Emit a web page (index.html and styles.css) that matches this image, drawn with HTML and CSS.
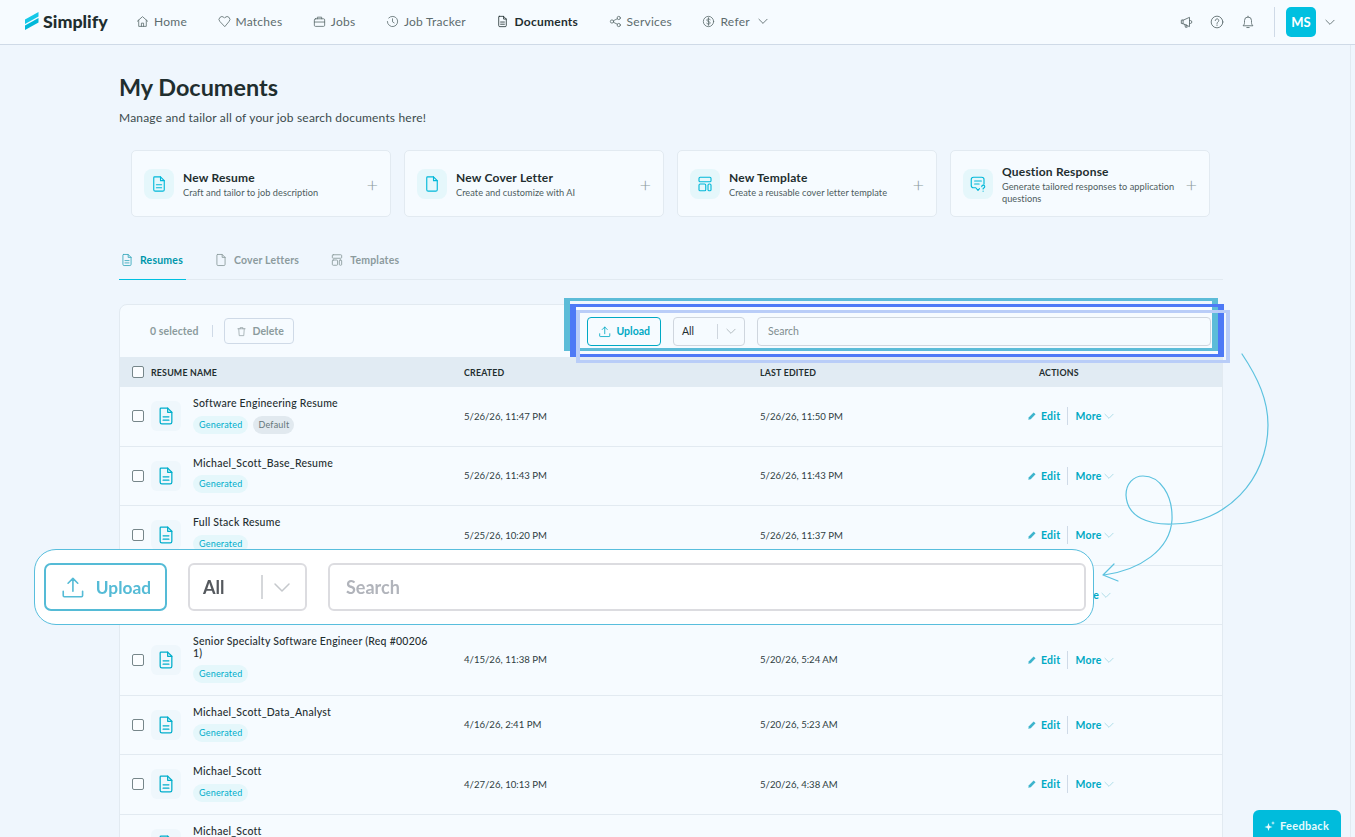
FILE: index.html
```html
<!DOCTYPE html>
<html>
<head>
    <title>My Documents | Simplify</title>
    <link rel="stylesheet" href="styles.css">
</head>
<body>
    <svg class="defs">
        <symbol id="doc" viewBox="0 0 24 24"><path d="M6 2.500h8l5 5v12a2 2 0 0 1-2 2H7a2 2 0 0 1-2-2v-16a1 1 0 0 1 1-1z"/><path d="M14 2.500v5h5M8.500 13h7M8.500 17h7"/></symbol>
        <symbol id="page" viewBox="0 0 24 24"><path d="M6 2.500h8l5 5v12a2 2 0 0 1-2 2H7a2 2 0 0 1-2-2v-16a1 1 0 0 1 1-1z"/><path d="M14 2.500v5h5"/></symbol>
        <symbol id="tpl" viewBox="0 0 24 24"><rect x="4" y="3" width="16" height="6" rx="1.500"/><rect x="4" y="12" width="9" height="9" rx="1.500"/><rect x="16" y="12" width="4" height="9" rx="1.500"/></symbol>
        <symbol id="chev" viewBox="0 0 24 24"><path d="M5 9l7 7 7-7"/></symbol>
        <symbol id="pen" viewBox="0 0 24 24"><path d="M3 21l1.500-6L16 3.500l4.500 4.500L9 19.500z" fill="currentColor"/></symbol>
        <symbol id="upload" viewBox="0 0 24 24"><path d="M12 16V4M7.500 8.500L12 4l4.500 4.500M3 16v4a1 1 0 0 0 1 1h16a1 1 0 0 0 1-1v-4"/></symbol>
    </svg>

    <header class="nav">
        <a class="logo">
            <svg class="logo-mark" viewBox="0 0 14 18"><path d="M0 7.500L13.500 0v4.500L0 12z" fill="#14c8e8"/><path d="M0 13.500L13.500 6v4.500L0 18z" fill="#00b8d9"/></svg>
            <span>Simplify</span>
        </a>
        <nav class="nav-links">
            <a class="nav-link"><svg class="ico" viewBox="0 0 24 24"><path d="M2.500 11.500L12 3l9.500 8.500M5 9.500V21h14V9.500M10 21v-6h4v6"/></svg>Home</a>
            <a class="nav-link"><svg class="ico" viewBox="0 0 24 24"><path d="M12 21L3.500 12a5.300 5.300 0 0 1 7.500-7.500l1 1 1-1a5.300 5.300 0 0 1 7.500 7.500z"/></svg>Matches</a>
            <a class="nav-link"><svg class="ico" viewBox="0 0 24 24"><rect x="2.500" y="7" width="19" height="14" rx="2"/><path d="M8 7V4h8v3M2.500 13h19"/></svg>Jobs</a>
            <a class="nav-link"><svg class="ico" viewBox="0 0 24 24"><path d="M5 5.500a9.500 9.500 0 1 1-2.500 6.500M12 7v5.500l3 2"/></svg>Job Tracker</a>
            <a class="nav-link active"><svg class="ico"><use href="#doc"/></svg>Documents</a>
            <a class="nav-link"><svg class="ico" viewBox="0 0 24 24"><circle cx="5.500" cy="12" r="3"/><circle cx="18" cy="5.500" r="3"/><circle cx="18" cy="18.500" r="3"/><path d="M8.300 10.500l7-3.500M8.300 13.500l7 3.500"/></svg>Services</a>
            <a class="nav-link"><svg class="ico" viewBox="0 0 24 24"><circle cx="12" cy="12" r="9.500"/><path d="M15 9c-.5-1.300-1.500-2-3-2-1.700 0-3 1-3 2.500 0 3.500 6 1.500 6 5 0 1.500-1.300 2.500-3 2.500-1.500 0-2.500-.7-3-2M12 5v14"/></svg>Refer<svg class="nav-chev"><use href="#chev"/></svg></a>
        </nav>
        <div class="nav-right">
            <svg class="nav-tool" viewBox="0 0 24 24"><path d="M4 9.500v5l3 .5V9zM7 9l11-5v16L7 15M10 16l1 5h3l-1-4M18 9.500h1.500a2.500 2.500 0 0 1 0 5H18"/></svg>
            <svg class="nav-tool" viewBox="0 0 24 24"><circle cx="12" cy="12" r="10"/><path d="M9 9.500a3 3 0 1 1 4.500 2.600c-1 .6-1.500 1.200-1.500 2.400M12 17v1"/></svg>
            <svg class="nav-tool" viewBox="0 0 24 24"><path d="M4 18c1.500-1.500 2-3 2-5V9.500a6 6 0 0 1 12 0V13c0 2 .5 3.500 2 5zM10 21.500h4M12 2v1.500"/></svg>
            <span class="nav-divider"></span>
            <span class="avatar">MS</span>
            <svg class="nav-chev"><use href="#chev"/></svg>
        </div>
    </header>

    <main class="main">
        <h1 class="title">My Documents</h1>
        <p class="subtitle">Manage and tailor all of your job search documents here!</p>

        <section class="cards">
            <div class="card">
                <span class="card-icon"><svg><use href="#doc"/></svg></span>
                <div class="card-text"><h3>New Resume</h3><p>Craft and tailor to job description</p></div>
                <span class="card-plus">+</span>
            </div>
            <div class="card">
                <span class="card-icon"><svg><use href="#page"/></svg></span>
                <div class="card-text"><h3>New Cover Letter</h3><p>Create and customize with AI</p></div>
                <span class="card-plus">+</span>
            </div>
            <div class="card">
                <span class="card-icon"><svg><use href="#tpl"/></svg></span>
                <div class="card-text"><h3>New Template</h3><p>Create a reusable cover letter template</p></div>
                <span class="card-plus">+</span>
            </div>
            <div class="card">
                <span class="card-icon"><svg viewBox="0 0 24 24"><path d="M20 12V6a3 3 0 0 0-3-3H6a3 3 0 0 0-3 3v8a3 3 0 0 0 3 3h3l3 3.500 2-2.300M7.500 8h9M7.500 12h6M17 15.500a2 2 0 1 1 2.500 2c-.6.3-.7.7-.7 1.200M18.800 21.500v.2"/></svg></span>
                <div class="card-text"><h3>Question Response</h3><p>Generate tailored responses to application questions</p></div>
                <span class="card-plus">+</span>
            </div>
        </section>

        <div class="tabs">
            <a class="tab active"><svg><use href="#doc"/></svg>Resumes</a>
            <a class="tab"><svg><use href="#page"/></svg>Cover Letters</a>
            <a class="tab"><svg><use href="#tpl"/></svg>Templates</a>
        </div>

        <section class="panel">
            <div class="toolbar">
                <span class="selected">0 selected</span>
                <span class="tool-divider"></span>
                <button class="btn-delete"><svg viewBox="0 0 24 24"><path d="M4 6h16M9 6V3.500h6V6M6 6l1 15h10l1-15"/></svg>Delete</button>
                <div class="toolbar-right">
                    <button class="btn-upload"><svg><use href="#upload"/></svg>Upload</button>
                    <div class="select"><span>All</span><i></i><svg><use href="#chev"/></svg></div>
                    <div class="search">Search</div>
                </div>
            </div>

            <div class="row head">
                <div class="name-cell"><span class="check"></span>RESUME NAME</div>
                <div>CREATED</div>
                <div>LAST EDITED</div>
                <div class="head-actions">ACTIONS</div>
            </div>

            <div class="row">
                <div class="name-cell"><span class="check"></span><span class="file"><svg><use href="#doc"/></svg></span>
                    <div class="name"><b>Software Engineering Resume</b><div class="tags"><span class="tag">Generated</span><span class="tag grey">Default</span></div></div></div>
                <div>5/26/26, 11:47 PM</div>
                <div>5/26/26, 11:50 PM</div>
                <div class="actions"><a class="edit"><svg><use href="#pen"/></svg>Edit</a><a class="more">More<svg><use href="#chev"/></svg></a></div>
            </div>
            <div class="row">
                <div class="name-cell"><span class="check"></span><span class="file"><svg><use href="#doc"/></svg></span>
                    <div class="name"><b>Michael_Scott_Base_Resume</b><div class="tags"><span class="tag">Generated</span></div></div></div>
                <div>5/26/26, 11:43 PM</div>
                <div>5/26/26, 11:43 PM</div>
                <div class="actions"><a class="edit"><svg><use href="#pen"/></svg>Edit</a><a class="more">More<svg><use href="#chev"/></svg></a></div>
            </div>
            <div class="row">
                <div class="name-cell"><span class="check"></span><span class="file"><svg><use href="#doc"/></svg></span>
                    <div class="name"><b>Full Stack Resume</b><div class="tags"><span class="tag">Generated</span></div></div></div>
                <div>5/25/26, 10:20 PM</div>
                <div>5/26/26, 11:37 PM</div>
                <div class="actions"><a class="edit"><svg><use href="#pen"/></svg>Edit</a><a class="more">More<svg><use href="#chev"/></svg></a></div>
            </div>
            <div class="row">
                <div class="name-cell"></div>
                <div></div>
                <div></div>
                <div class="actions"><a class="more more-hidden">More<svg><use href="#chev"/></svg></a></div>
            </div>
            <div class="row tall">
                <div class="name-cell"><span class="check"></span><span class="file"><svg><use href="#doc"/></svg></span>
                    <div class="name"><b>Senior Specialty Software Engineer (Req #002061)</b><div class="tags"><span class="tag">Generated</span></div></div></div>
                <div>4/15/26, 11:38 PM</div>
                <div>5/20/26, 5:24 AM</div>
                <div class="actions"><a class="edit"><svg><use href="#pen"/></svg>Edit</a><a class="more">More<svg><use href="#chev"/></svg></a></div>
            </div>
            <div class="row">
                <div class="name-cell"><span class="check"></span><span class="file"><svg><use href="#doc"/></svg></span>
                    <div class="name"><b>Michael_Scott_Data_Analyst</b><div class="tags"><span class="tag">Generated</span></div></div></div>
                <div>4/16/26, 2:41 PM</div>
                <div>5/20/26, 5:23 AM</div>
                <div class="actions"><a class="edit"><svg><use href="#pen"/></svg>Edit</a><a class="more">More<svg><use href="#chev"/></svg></a></div>
            </div>
            <div class="row">
                <div class="name-cell"><span class="check"></span><span class="file"><svg><use href="#doc"/></svg></span>
                    <div class="name"><b>Michael_Scott</b><div class="tags"><span class="tag">Generated</span></div></div></div>
                <div>4/27/26, 10:13 PM</div>
                <div>5/20/26, 4:38 AM</div>
                <div class="actions"><a class="edit"><svg><use href="#pen"/></svg>Edit</a><a class="more">More<svg><use href="#chev"/></svg></a></div>
            </div>
            <div class="row">
                <div class="name-cell"><span class="check"></span><span class="file"><svg><use href="#doc"/></svg></span>
                    <div class="name name-cut"><b>Michael_Scott</b></div></div>
                <div></div>
                <div></div>
                <div class="actions"></div>
            </div>
        </section>
    </main>

    <!-- tutorial overlay -->
    <div class="hl hl-teal"></div>
    <div class="hl hl-blue"></div>
    <div class="hl hl-light"></div>

    <svg class="arrow" viewBox="0 0 1355 837">
        <path d="M1242 354C1258 378 1268 400 1268 425C1268 480 1225 524 1173 524C1150 525 1127 518 1126 495C1126 484 1133 476 1143 476C1160 476 1173 495 1172 520C1170 550 1140 570 1104 575M1114 564L1103 575L1118 581"/>
    </svg>

    <div class="callout">
        <button class="big-upload"><svg><use href="#upload"/></svg>Upload</button>
        <div class="big-select"><span>All</span><i></i><svg><use href="#chev"/></svg></div>
        <div class="big-search">Search</div>
    </div>

    <button class="feedback">
        <svg viewBox="0 0 24 24"><path d="M9 6l2 6 6 2-6 2-2 6-2-6-6-2 6-2zM18 2l1 3 3 1-3 1-1 3-1-3-3-1 3-1z" fill="currentColor"/></svg>Feedback
    </button>
</body>
</html>
```

FILE: styles.css
```css
html, body {
    margin: 0;
    height: 837px;
    overflow: hidden;
}

body {
    position: relative;
    background: #eff6fd;
    color: #1f2e2f;
    font-family: "Lato", "Liberation Sans", sans-serif;
}

svg {
    fill: none;
    stroke: currentColor;
    stroke-width: 1.5;
    stroke-linecap: round;
    stroke-linejoin: round;
}

.defs {
    display: none;
}

button {
    font-family: inherit;
}

/* top bar */
.nav {
    display: flex;
    align-items: center;
    height: 44px;
    padding: 0 18px 0 25px;
    background: #f6fbff;
    border-bottom: 1px solid #cfdae7;
}

.logo {
    display: flex;
    align-items: center;
    gap: 4px;
    width: 111px;
    margin-bottom: 2px;
    font-size: 17.8px;
    font-weight: 900;
}

.logo-mark {
    width: 14px;
    height: 18px;
    stroke: none;
}

.nav-links {
    display: flex;
    gap: 30.5px;
    margin-bottom: 2px;
}

.nav-link {
    display: flex;
    align-items: center;
    gap: 5px;
    font-size: 12px;
    letter-spacing: .25px;
    color: #5d6c6e;
}

.nav-link.active {
    color: #1f2e2f;
    font-weight: 700;
}

.ico {
    width: 13px;
    height: 13px;
}

.nav-chev {
    width: 14px;
    height: 14px;
    margin-left: 1px;
}

.nav-right {
    display: flex;
    align-items: center;
    margin-left: auto;
    color: #5d6c6e;
}

.nav-tool {
    width: 14px;
    height: 14px;
    margin-right: 17px;
}

.nav-divider {
    width: 1px;
    height: 30px;
    margin: 0 11px 0 2px;
    background: #cfdae7;
}

.avatar {
    display: flex;
    align-items: center;
    justify-content: center;
    width: 30px;
    height: 30px;
    margin-right: 6px;
    background: #00c0e0;
    border-radius: 5px;
    color: #fff;
    font-size: 13px;
    font-weight: 700;
}

/* page */
.main {
    width: 1104px;
    padding: 28px 127px 0 119px;
    border-right: 1px solid #e2eaf1;
    height: 800px;
}

.title {
    margin: 0;
    font-size: 23.4px;
    line-height: 28px;
    font-weight: 700;
}

.subtitle {
    margin: 9px 0 0;
    font-size: 12px;
    line-height: 16px;
    letter-spacing: .18px;
    color: #3c4b4c;
}

.cards {
    display: flex;
    gap: 13px;
    margin: 24px 0 0 12px;
}

.card {
    display: flex;
    align-items: center;
    box-sizing: border-box;
    width: 260px;
    height: 67px;
    padding: 0 12px;
    background: #f6fbff;
    border: 1px solid #e2eaf1;
    border-radius: 5px;
}

.card-icon {
    display: flex;
    align-items: center;
    justify-content: center;
    flex: none;
    width: 30px;
    height: 30px;
    margin-right: 9px;
    background: #e5f7fb;
    border-radius: 8px;
    color: #00b8d9;
}

.card-icon svg {
    width: 18px;
    height: 18px;
}

.card-text {
    flex: 1;
    padding-top: 2px;
}

.card-text h3 {
    margin: 0;
    font-size: 12px;
    line-height: 15px;
    font-weight: 700;
    letter-spacing: .2px;
}

.card-text p {
    margin: 2px 0 0;
    font-size: 9.2px;
    line-height: 12px;
    letter-spacing: .05px;
    color: #4d5c5d;
}

.card-plus {
    margin-left: 6px;
    font-size: 20px;
    font-weight: 300;
    color: #8a9a9b;
}

.tabs {
    display: flex;
    gap: 31px;
    height: 29px;
    margin-top: 33px;
    border-bottom: 1px solid #e2eaf1;
}

.tab {
    display: flex;
    align-items: center;
    gap: 6px;
    box-sizing: border-box;
    height: 29px;
    padding-bottom: 9px;
    font-size: 10.5px;
    font-weight: 700;
    letter-spacing: .2px;
    color: #8c9b9d;
}

.tab svg {
    width: 14px;
    height: 14px;
}

.tab.active {
    padding-left: 1px;
    padding-right: 3px;
    margin-right: -3px;
    color: #0096ab;
    box-shadow: 0 1px 0 #00c0e0;
}

.tab.active svg {
    color: #3aa9bd;
}

/* table */
.panel {
    margin-top: 24px;
    background: #f6fbff;
    border: 1px solid #e2eaf1;
    border-radius: 8px 8px 0 0;
    overflow: hidden;
}

.toolbar {
    display: flex;
    align-items: center;
    height: 52px;
    padding: 0 11px 0 30px;
}

.selected {
    font-size: 10.5px;
    font-weight: 700;
    letter-spacing: .1px;
    color: #8c9b9d;
}

.tool-divider {
    width: 1px;
    height: 12px;
    margin: 0 11px 0 13px;
    background: #cfdae7;
}

.btn-delete {
    display: flex;
    align-items: center;
    gap: 6px;
    height: 26px;
    padding: 0 9px 0 11px;
    background: none;
    border: 1px solid #cfdae7;
    border-radius: 4px;
    font-size: 10.5px;
    font-weight: 700;
    color: #8c9b9d;
}

.btn-delete svg {
    width: 11px;
    height: 11px;
}

.toolbar-right {
    display: flex;
    gap: 12px;
    margin-left: auto;
}

.btn-upload {
    display: flex;
    align-items: center;
    gap: 5px;
    box-sizing: border-box;
    width: 74px;
    height: 29px;
    padding: 0 10px;
    background: none;
    border: 1px solid #00a9c4;
    border-radius: 4px;
    color: #00a9c4;
    font-size: 10.5px;
    font-weight: 700;
}

.btn-upload svg {
    width: 15px;
    height: 15px;
}

.select {
    display: flex;
    align-items: center;
    box-sizing: border-box;
    width: 72px;
    height: 29px;
    padding-left: 8px;
    border: 1px solid #cfd6de;
    border-radius: 4px;
    font-size: 10.5px;
}

.select span {
    width: 35px;
}

.select i {
    width: 1px;
    height: 15px;
    background: #cfd6de;
}

.select svg {
    width: 14px;
    height: 14px;
    margin-left: 6px;
    color: #aab4b8;
}

.search {
    box-sizing: border-box;
    width: 454px;
    height: 29px;
    padding-left: 10px;
    border: 1px solid #cfd6de;
    border-radius: 4px;
    font-size: 10.5px;
    line-height: 27px;
    color: #7f8d8f;
}

.row {
    display: grid;
    grid-template-columns: 332px 296px 267px 1fr;
    align-items: center;
    box-sizing: border-box;
    height: 59.6px;
    padding-left: 12px;
    border-bottom: 1px solid #e2eaf1;
    font-size: 9.6px;
    color: #2f3e3f;
}

.row.tall {
    height: 70.2px;
}

.row.head {
    height: 30px;
    background: #e1ebf3;
    border-bottom: 0;
    font-size: 8.8px;
    font-weight: 700;
    letter-spacing: .2px;
    color: #1f2e2f;
}

.head-actions {
    padding-left: 12px;
}

.name-cell {
    display: flex;
    align-items: center;
}

.check {
    flex: none;
    box-sizing: border-box;
    width: 12px;
    height: 12px;
    margin-right: 7px;
    background: #fbfdff;
    border: 1px solid #76868a;
    border-radius: 2px;
}

.file {
    display: flex;
    align-items: center;
    justify-content: center;
    flex: none;
    width: 30px;
    height: 30px;
    margin-right: 12px;
    background: #eff7fc;
    border-radius: 6px;
    color: #00aecb;
}

.file svg {
    width: 20px;
    height: 20px;
}

.name {
    width: 238px;
    padding-bottom: 2px;
    word-break: break-all;
}

.name-cut {
    padding-bottom: 26px;
}

.name b {
    display: block;
    font-size: 10.5px;
    font-weight: 500;
    line-height: 12px;
    letter-spacing: .25px;
    color: #1f2e2f;
}

.tags {
    display: flex;
    gap: 5px;
    margin-top: 6.5px;
}

.tall .tags {
    margin-top: 5.5px;
}

.tag {
    padding: 0 6px;
    height: 18px;
    line-height: 18px;
    background: #e5f7fb;
    border-radius: 9px;
    font-size: 9px;
    letter-spacing: .2px;
    color: #00aecb;
}

.tag.grey {
    padding: 0 5px;
    background: #e1e9ef;
    color: #66767a;
}

.actions {
    display: flex;
    align-items: center;
    font-size: 10.5px;
    font-weight: 700;
    letter-spacing: .25px;
    color: #00a9c4;
}

.edit {
    display: flex;
    align-items: center;
    gap: 4px;
    height: 18px;
    padding-right: 7px;
    border-right: 1px solid #cfdae7;
}

.edit svg {
    width: 10px;
    height: 10px;
    stroke: none;
    color: #3db4cc;
}

.more {
    display: flex;
    align-items: center;
    margin-left: 7px;
}

.more-hidden {
    margin-left: 46px;
}

.more svg {
    width: 14px;
    height: 14px;
    stroke-width: 1;
    color: #7cc7d8;
}

/* highlight boxes over the toolbar */
.hl {
    position: absolute;
    width: 654px;
    height: 53px;
    box-sizing: border-box;
    border-style: solid;
    border-width: 3px 6px;
}

.hl-teal {
    left: 564px;
    top: 298px;
    border-color: #5cbcd8;
}

.hl-blue {
    left: 570px;
    top: 304px;
    border-color: #4d79f6;
}

.hl-light {
    left: 576px;
    top: 310px;
    border-width: 3px 4px;
    border-color: #b9cdf8;
}

.arrow {
    position: absolute;
    left: 0;
    top: 0;
    width: 1355px;
    height: 837px;
    stroke: #5cc2df;
    stroke-width: 1.2;
    pointer-events: none;
}

.callout {
    position: absolute;
    left: 34px;
    top: 549px;
    display: flex;
    align-items: center;
    gap: 21px;
    box-sizing: border-box;
    width: 1060px;
    height: 76px;
    padding: 0 7px 0 9px;
    background: #fff;
    border: 1px solid #58bedd;
    border-radius: 22px;
}

.big-upload {
    display: flex;
    align-items: center;
    gap: 10px;
    box-sizing: border-box;
    width: 123px;
    height: 48px;
    padding: 0 14px;
    background: #fff;
    border: 2px solid #55bbd6;
    border-radius: 7px;
    color: #55bbd6;
    font-size: 17.3px;
    font-weight: 700;
    filter: blur(.6px);
}

.big-upload svg {
    width: 26px;
    height: 26px;
}

.big-select {
    display: flex;
    align-items: center;
    box-sizing: border-box;
    width: 119px;
    height: 48px;
    padding-left: 13px;
    border: 2px solid #dcdce0;
    border-radius: 6px;
    font-size: 18px;
    font-weight: 700;
    color: #55595e;
    filter: blur(.6px);
}

.big-select span {
    width: 58px;
}

.big-select i {
    width: 2px;
    height: 24px;
    background: #d5d7da;
}

.big-select svg {
    width: 24px;
    height: 24px;
    margin-left: 7px;
    color: #c5c8cc;
}

.big-search {
    box-sizing: border-box;
    width: 758px;
    height: 48px;
    padding-left: 16px;
    border: 2px solid #dcdce0;
    border-radius: 6px;
    font-size: 18px;
    font-weight: 700;
    line-height: 44px;
    color: #b1b4bb;
    filter: blur(.6px);
}

.feedback {
    position: fixed;
    left: 1253px;
    top: 810px;
    display: flex;
    align-items: center;
    gap: 4px;
    width: 88px;
    height: 27px;
    padding: 4px 0 0 11px;
    background: #00bcdc;
    border: 0;
    border-radius: 6px 6px 0 0;
    color: #e6fafd;
    font-size: 11px;
    font-weight: 700;
    letter-spacing: .3px;
}

.feedback svg {
    width: 12px;
    height: 12px;
    stroke: none;
}
```
